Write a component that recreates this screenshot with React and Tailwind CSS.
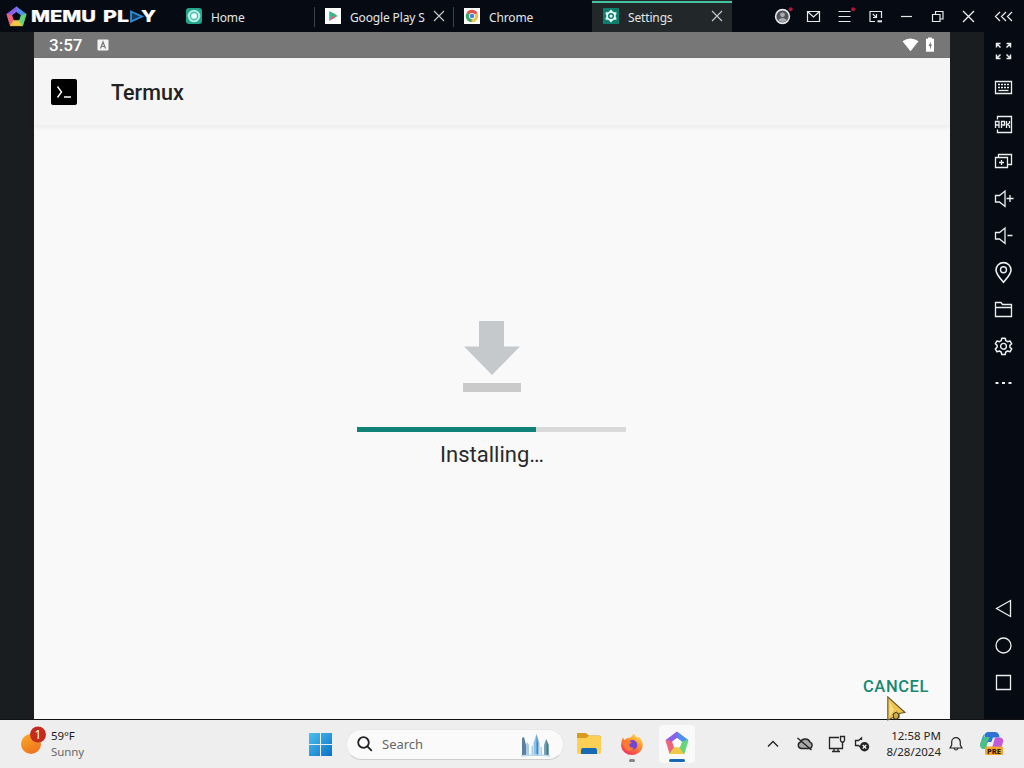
import React from "react"

const Logo = ({ size, hole }) => (
  <svg width={size} height={size} viewBox="0 0 24 24" className="shrink-0">
    <g strokeWidth="1" strokeLinejoin="round">
      <path d="M12 1 L23 9.3 L17 11 L12 7.5 Z" fill="#4f8ff0" stroke="#4f8ff0" />
      <path d="M12 1 L12 7.5 L7.5 11 L1 9.3 Z" fill="#8b60ea" stroke="#8b60ea" />
      <path d="M1 9.3 L7.5 11 L9.5 16 L5 22.5 Z" fill="#ee6478" stroke="#ee6478" />
      <path d="M5 22.5 L9.5 16 L15 16 L19 22.5 Z" fill="#f0c848" stroke="#f0c848" />
      <path d="M19 22.5 L14.8 16 L17 11 L23 9.3 Z" fill="#66d67c" stroke="#66d67c" />
    </g>
    <path d="M12 7.4 L16.4 10.6 L14.7 15.8 L9.3 15.8 L7.6 10.6 Z" fill={hole} stroke={hole} strokeWidth="1" strokeLinejoin="round" />
  </svg>
)

const CloseX = () => (
  <svg width="12" height="12" viewBox="0 0 12 12" className="shrink-0" stroke="#c4c6c8" strokeWidth="1.2">
    <path d="M1 1 L11 11 M11 1 L1 11" />
  </svg>
)

const HomeIcon = () => (
  <svg width="16" height="16" viewBox="0 0 16 16" className="shrink-0">
    <rect width="16" height="16" rx="3" fill="#22a78c" />
    <circle cx="8" cy="8" r="6.3" fill="#b4ece2" />
    <circle cx="8" cy="8" r="3.6" fill="none" stroke="#4bb9aa" strokeWidth="1.2" />
    <circle cx="8" cy="8" r="2.6" fill="#e8fffb" />
  </svg>
)

const PlayIcon = () => (
  <svg width="16" height="16" viewBox="0 0 16 16" className="shrink-0">
    <rect width="16" height="16" fill="#fdfdfd" />
    <path d="M4.2 3 L8.5 8 L4.2 13 Z" fill="#37b6b0" />
    <path d="M4.2 3 L10.8 6.4 L8 8.8 Z" fill="#31b978" />
    <path d="M10.2 6.2 L12.7 8 L10.2 9.6 L8 8 Z" fill="#4cb87a" />
    <path d="M4.2 13 L10.4 9.5 L8 7.8 Z" fill="#e4586a" />
  </svg>
)

const ChromeIcon = () => (
  <svg width="16" height="16" viewBox="0 0 16 16" className="shrink-0">
    <rect width="16" height="16" fill="#fdfdfd" />
    <path d="M8 8 L2.6 4.9 A6.2 6.2 0 0 1 13.6 5.2 Z" fill="#dd5548" />
    <path d="M8 8 L13.6 5.2 A6.2 6.2 0 0 1 7.6 14.2 Z" fill="#f0c252" />
    <path d="M8 8 L7.6 14.2 A6.2 6.2 0 0 1 2.6 4.9 Z" fill="#36a565" />
    <circle cx="8" cy="8" r="3" fill="#fff" />
    <circle cx="8" cy="8" r="2.3" fill="#5084cc" />
  </svg>
)

const gearPath =
  "M7.8 1.2 h3.4 l0.6 2.5 l1.8 1 l2.4 -0.8 l1.7 2.9 l-1.8 1.6 v1.9 l1.8 1.6 l-1.7 2.9 l-2.4 -0.8 l-1.8 1 l-0.6 2.5 h-3.4 l-0.6 -2.5 l-1.8 -1 l-2.4 0.8 l-1.7 -2.9 l1.8 -1.6 v-1.9 l-1.8 -1.6 l1.7 -2.9 l2.4 0.8 l1.8 -1 Z"

const SettingsIcon = () => (
  <svg width="16" height="16" viewBox="0 0 16 16" className="shrink-0">
    <rect width="16" height="16" fill="#0d7f6d" />
    <path
      d="M8 1.8 L10 4.2 L13.3 4.8 L12.2 8 L13.3 11.2 L10 11.8 L8 14.2 L6 11.8 L2.7 11.2 L3.8 8 L2.7 4.8 L6 4.2 Z"
      fill="#ecfffa"
      stroke="#ecfffa"
      strokeWidth="0.6"
    />
    <circle cx="8" cy="8" r="2.3" fill="#ecfffa" stroke="#0d7f6d" strokeWidth="1.5" />
  </svg>
)

const tabs = [
  { label: "Home", icon: <HomeIcon /> },
  { label: "Google Play S", icon: <PlayIcon />, close: true },
  { label: "Chrome", icon: <ChromeIcon /> }
]

const windowIcons = [
  <>
    <circle cx="10.5" cy="10.5" r="6.9" fill="#50535a" strokeWidth="1.6" />
    <circle cx="10.5" cy="8.8" r="2.4" fill="#a9abb0" stroke="none" />
    <path d="M6 14 Q10.5 10 15 14 Q10.5 18 6 14 Z" fill="#a9abb0" stroke="none" />
    <circle cx="18.7" cy="3.2" r="2" fill="#b3133c" stroke="none" />
  </>,
  <path d="M4.5 5.5 h12 v10 h-12 Z M5 6 l5.5 5 l5.5 -5" />,
  <>
    <path d="M4.5 5.5 h12 M4.5 10.5 h12 M4.5 15.5 h12" />
    <circle cx="19.2" cy="3.2" r="2" fill="#b3133c" stroke="none" />
  </>,
  <>
    <path d="M10 15.5 h-5 v-10 h11.5 v6.5" />
    <path d="M7.8 8 l3.2 3.2 M11.5 8 v3.5 h-3.5" />
    <path d="M12.5 15.3 h4.5" strokeWidth="2" />
  </>,
  <path d="M5 10.5 h11" />,
  <path d="M5.5 8.5 h7.5 v7 h-7.5 Z M8.5 8.5 v-3 h7.5 v7.5 h-3" />,
  <path d="M5 5 l11 11 M16 5 l-11 11" strokeWidth="1.4" />
]

const speaker = "M1.5 6.5 h4 l5.5 -4.5 v15.5 l-5.5 -4.5 h-4 Z"

const sideIcons = [
  <path
    d="M2.5 6.5 v-4 h4 M2.5 2.5 l4 4 M12.5 2.5 h4 v4 M16.5 2.5 l-4 4 M2.5 13.5 v4 h4 M2.5 17.5 l4 -4 M12.5 17.5 h4 v-4 M16.5 17.5 l-4 -4"
    strokeWidth="1.5"
  />,
  <>
    <path d="M1.5 3.5 h16 v12 h-16 Z" />
    <path d="M4 6.5 h11.5 M4 9.5 h11.5" strokeDasharray="2 1" />
    <path d="M4.5 12.5 h10" />
  </>,
  <>
    <path d="M3.5 4.5 v-3 h14 v16 h-14 v-3" />
    <path d="M1.5 13 v-6.5 h3.5 v6.5 M1.5 10 h3.5 M7.5 13 v-6.5 h3 v3.5 h-3 M12.5 6 v7 M15.5 6 v2 l-2 1.5 l2 1.5 v2" />
  </>,
  <path d="M1.5 5.5 h12 v10 h-12 Z M4.5 5.5 v-3 h13 v10 h-4 M7.5 8 v5 M5 10.5 h5" />,
  <path d={speaker + " M12.5 9.5 h7 M16 6 v7"} />,
  <path d={speaker + " M13.5 9.5 h5"} />,
  <>
    <path d="M9.5 19.3 C6 15 2 11 2 6.9 A7.5 7.3 0 0 1 17 6.9 C17 11 13 15 9.5 19.3 Z" strokeWidth="1.6" />
    <circle cx="9.5" cy="6.7" r="3" strokeWidth="1.4" />
  </>,
  <path d="M1.5 16.5 v-14 h5.5 l1.5 2 h9 v12 Z M1.5 7.5 h16" />,
  <>
    <path d={gearPath} strokeWidth="1.5" strokeLinejoin="round" />
    <circle cx="9.5" cy="9.3" r="2.9" strokeWidth="1.4" />
  </>,
  <path d="M1.5 9 h3 M8 9 h3 M14.5 9 h3" strokeWidth="2" />
]

const navIcons = [
  <path d="M16.5 2.5 v16 L2.5 10.5 Z" />,
  <circle cx="9.5" cy="10.5" r="7.5" />,
  <path d="M2.5 3.5 h14 v14 h-14 Z" />
]

const SideButton = ({ children }) => (
  <div className="flex h-[37px] items-center justify-center">
    <svg width="20" height="21" viewBox="0 0 20 21" fill="none" stroke="#eceef0" strokeWidth="1.3" className="overflow-visible">
      {children}
    </svg>
  </div>
)

const TitleBar = () => (
  <div className="flex h-8 bg-[#060a12] text-[12px] tracking-[-0.15px] text-[#e4e6e8]">
    <div className="flex w-[176px] items-center pl-[6px]">
      <Logo size={21} hole="#060a12" />
      <svg width="126" height="20" viewBox="0 0 126 20" className="ml-[3px] font-['Inter'] font-extrabold tracking-normal" fontSize="15.5" fill="#fff" stroke="#fff" strokeWidth="0.2">
        <text x="1" y="16" textLength="65" lengthAdjust="spacingAndGlyphs">MEMU</text>
        <text x="73" y="16" textLength="26" lengthAdjust="spacingAndGlyphs">PL</text>
        <path d="M101 5.5 L112 10.5 L101 15.5 Z" fill="#123a63" stroke="#2f8fd8" strokeWidth="1.8" />
        <text x="111" y="16" textLength="15" lengthAdjust="spacingAndGlyphs">Y</text>
      </svg>
    </div>
    {tabs.map((tab) => (
      <div key={tab.label} className="flex w-[139px] items-center py-[7px]">
        <div className="flex min-w-0 flex-1 items-center pl-[10px]">
          {tab.icon}
          <span className="ml-[9px] w-[83px] whitespace-nowrap pt-[3px]">{tab.label}</span>
          {tab.close && <CloseX />}
        </div>
        {tab.label !== "Chrome" && <div className="mt-px h-[20px] w-px bg-[#3d4147]" />}
      </div>
    ))}
    <div className="-ml-px flex w-[140px] flex-col bg-[#222729] pt-px">
      <div className="h-[2px] bg-[#43c3a0]" />
      <div className="flex flex-1 items-center pb-[3px] pl-[11px]">
        <SettingsIcon />
        <span className="ml-[9px] w-[83px] pt-[3px]">Settings</span>
        <CloseX />
      </div>
    </div>
    <div className="ml-[35px] flex items-center">
      {windowIcons.map((icon, i) => (
        <div key={i} className="flex w-[31px] justify-center">
          <svg width="21" height="20" viewBox="0 0 21 20" fill="none" stroke="#e6e8ea" strokeWidth="1.2" className="overflow-visible">
            {icon}
          </svg>
        </div>
      ))}
    </div>
    <div className="flex w-10 items-center justify-center">
      <svg width="20" height="20" viewBox="0 0 20 20" fill="none" stroke="#e6e8ea" strokeWidth="1.3">
        <path d="M6 6 l-4.5 4.5 l4.5 4.5 M12 6 l-4.5 4.5 l4.5 4.5 M18 6 l-4.5 4.5 l4.5 4.5" />
      </svg>
    </div>
  </div>
)

const AndroidScreen = () => (
  <div className="flex w-[916px] flex-col bg-[#f9f9f9] font-['Roboto']">
    {/* Status bar */}
    <div className="flex h-[26px] items-center bg-[#777777] pl-[15px] pr-[15px] text-white">
      <span className="w-[48px] pt-[2px] text-[17px] font-medium">3:57</span>
      <svg width="12" height="12" viewBox="0 0 12 12">
        <rect x="0.5" y="0.5" width="11" height="11" rx="1" fill="#f4f4f4" />
        <path d="M3.5 9.5 L6 3 L8.5 9.5 M4.3 7.5 h3.4" fill="none" stroke="#777" strokeWidth="1.2" />
      </svg>
      <svg width="17" height="14" viewBox="0 0 17 14" className="ml-auto" fill="#fff">
        <path d="M0.5 3.2 Q8.5 -2.4 16.5 3.2 L8.5 13.2 Z" />
      </svg>
      <svg width="10" height="16" viewBox="0 0 10 16" className="ml-[6px]">
        <path d="M3 0.5 h4 v1.3 h2 v13 h-8 v-13 h2 Z" fill="#fff" />
        <path d="M5.7 4.5 L3.5 9 h1.5 v3.5 L7 7.5 h-1.3 Z" fill="#777" />
      </svg>
    </div>
    <div className="flex h-[68px] items-center border-b border-[#eeeeee] bg-[#f5f5f5] pl-[17px] shadow-[0_1px_5px_rgba(0,0,0,0.07)]">
      <svg width="26" height="26" viewBox="0 0 26 26">
        <rect width="26" height="26" rx="2" fill="#000" />
        <path d="M6.5 7.5 L10.5 13 L6.5 18.5 M13 18 h7" fill="none" stroke="#fff" strokeWidth="1.4" />
      </svg>
      <span className="ml-[34px] pt-[3px] text-[21.5px] font-medium text-[#222222]">Termux</span>
    </div>
    <div className="flex flex-1 flex-col items-center pt-[195px]">
      <svg width="58" height="71" viewBox="0 0 58 71">
        <path d="M16 0 h25 v25.5 h16 L29 54 L1 25.5 h15 Z" fill="#c6c9cb" />
        <rect y="62" width="58" height="9" fill="#cacaca" />
      </svg>
      <div className="mr-px mt-[35px] h-[5px] w-[269px] bg-[#d9d9d9]">
        <div className="h-full w-[179px] bg-[#108278]" />
      </div>
      <div className="mt-[6px] text-[22px] leading-[33px] text-[#2a2a2a]">Installing…</div>
      <div className="mb-[20px] mr-[21px] mt-auto self-end text-[16.5px] font-medium leading-[24px] tracking-[0.6px] text-[#158a73]">CANCEL</div>
    </div>
  </div>
)

const Taskbar = () => (
  <div className="flex h-12 items-center bg-[#eeeeee] font-['Noto_Sans']">
    <svg width="28" height="32" viewBox="0 0 28 32" className="-mt-[6px] ml-[20px]">
      <defs>
        <linearGradient id="sun" x1="0" y1="0" x2="0.5" y2="1">
          <stop offset="0" stopColor="#f9ad25" />
          <stop offset="1" stopColor="#ef7620" />
        </linearGradient>
      </defs>
      <circle cx="11" cy="19" r="10" fill="url(#sun)" />
      <circle cx="18" cy="9.5" r="8" fill="#c42b1c" />
      <text x="18" y="13.8" textAnchor="middle" fontSize="12" fill="#fff">1</text>
    </svg>
    <div className="ml-[3px] w-[257px] text-[11.5px] leading-4 tracking-[-0.1px]">
      <div className="text-[#1b1b1b]">59°F</div>
      <div className="text-[#696969]">Sunny</div>
    </div>

    <svg width="24" height="24" viewBox="0 0 24 24">
      <defs>
        <linearGradient id="win" x1="0" y1="0" x2="1" y2="1">
          <stop offset="0" stopColor="#4cc2ee" />
          <stop offset="1" stopColor="#0870c8" />
        </linearGradient>
      </defs>
      <path d="M1 1 h11 v11 h-11 Z M13 1 h11 v11 h-11 Z M1 13 h11 v11 h-11 Z M13 13 h11 v11 h-11 Z" fill="url(#win)" />
    </svg>

    <div className="ml-[14px] flex h-[31px] w-[218px] items-center rounded-full border border-[#e8e8e8] border-b-[#cdcdcd] bg-[#fafafa] pl-[10px] pr-[12px]">
      <svg width="16" height="16" viewBox="0 0 16 16" fill="none" stroke="#222" strokeWidth="1.8">
        <circle cx="6.5" cy="6.5" r="5.3" />
        <path d="M10.4 10.4 L14.8 14.8" />
      </svg>
      <span className="ml-[9px] pt-px text-[13px] text-[#666666]">Search</span>
      <svg width="30" height="24" viewBox="0 0 30 24" className="ml-auto mt-[4px]">
        <path d="M1 4 L3 3 L5 11 V21 H1 Z" fill="#5d7f9d" />
        <path d="M6 8 L8 11 V22 H5 V11 Z" fill="#a9cbe6" />
        <path d="M15.5 0 L18.5 9 V22 H12.5 V9 Z" fill="#8fc1e6" />
        <path d="M15.5 0 L17 9 V22 H15.5 Z" fill="#3f86c0" />
        <path d="M10.5 12 H12 V22 H10.5 Z M19.5 13 H21 V22 H19.5 Z" fill="#a7d0ea" />
        <path d="M25 5 L28 11 V21 H23 V11 Z" fill="#77a4b3" />
        <path d="M25.5 5 L27 11 V21 H25.5 Z" fill="#4b7686" />
        <path d="M0 22 Q15 20 29 22" fill="none" stroke="#b6d9ec" strokeWidth="1.5" />
      </svg>
    </div>

    <svg width="26" height="24" viewBox="0 0 26 24" className="ml-[12px]">
      <path d="M1 1.5 Q1 1 2 1 h8 l3 2.5 h10 q2 0 2 2 V12 H1 Z" fill="#d99b1f" />
      <path d="M1 6 h9 l3 -2 h10 q2 0 2 2 V20 q0 2 -2 2 H3 q-2 0 -2 -2 Z" fill="#fbd055" />
      <path d="M5 22 V18 q0 -2 2 -2 h12 q2 0 2 2 V22 Z" fill="#1669b3" />
    </svg>

    <div className="ml-[18px] mt-[7px] flex flex-col items-center">
      <svg width="24" height="24" viewBox="0 0 24 24">
        <defs>
          <linearGradient id="fox" x1="0.8" y1="0" x2="0.2" y2="1">
            <stop offset="0" stopColor="#ffe04b" />
            <stop offset="0.45" stopColor="#ff8a2a" />
            <stop offset="1" stopColor="#ee2b63" />
          </linearGradient>
        </defs>
        <path d="M3 4.5 L4.5 7 Q7 4.5 10 4.8 Q12 4 13.5 0.8 Q16 3 17.5 5 L19 4 Q23 8 22.8 13 A11 10.5 0 0 1 1 13 Q0.8 8 3 4.5 Z" fill="url(#fox)" />
        <circle cx="12.3" cy="12" r="5" fill="#7146d0" />
        <path d="M3 8.5 Q8 6 12 9.5 Q9.5 10 9.2 12 Q10 15.5 14 14.5 Q12 18.5 7 17.5 Q3 14 3 8.5 Z" fill="#fb7a35" />
      </svg>
      <div className="mt-[2px] h-[3px] w-[6px] rounded-full bg-[#858585]" />
    </div>

    <div className="ml-[15px] flex h-[38px] w-[36px] flex-col items-center rounded bg-[#f9f9f9] pt-[6px]">
      <Logo size={24} hole="#ffffff" />
      <div className="mt-[4px] h-[3px] w-4 rounded-full bg-[#1769b5]" />
    </div>

    <div className="ml-[72px] flex items-center">
      <svg width="12" height="12" viewBox="0 0 12 12" fill="none" stroke="#222" strokeWidth="1.3">
        <path d="M1 8.5 L6 3.5 L11 8.5" />
      </svg>
      <svg width="18" height="16" viewBox="0 0 18 16" className="ml-[17px]" fill="none" stroke="#252525" strokeWidth="1.4">
        <path d="M5 12.5 h8.5 a3.3 3.3 0 0 0 0.5 -6.3 a5 4.5 0 0 0 -9.5 -0.2 a3.4 3.4 0 0 0 0.5 6.5 Z" fill="#a8a8a8" />
        <path d="M1.5 2 L15.5 14" />
      </svg>
      <svg width="18" height="18" viewBox="0 0 18 18" className="ml-[14px]" fill="none" stroke="#252525" strokeWidth="1.3">
        <path d="M11 2.5 H1.5 V13.5 H14.5 V9 M4 16.5 h8 M6 13.5 v3 M10 13.5 v3" />
        <path d="M12.5 1.5 h4 v4 l-1 1.5 h-2 l-1 -1.5 Z M14.5 7 v3" />
      </svg>
      <svg width="17" height="16" viewBox="0 0 17 16" className="ml-[8px]" fill="none" stroke="#252525" strokeWidth="1.3">
        <path d="M7.5 4 V2 L4.5 4.5 H1.5 V9.5 H4.5 L6 11" />
        <circle cx="10.5" cy="10.8" r="4.7" fill="#252525" stroke="none" />
        <path d="M8.7 9 L12.3 12.6 M12.3 9 L8.7 12.6" stroke="#fff" />
      </svg>
    </div>

    <div className="w-[70px] whitespace-nowrap text-right text-[11.5px] leading-4 text-[#252525]">
      <div>12:58 PM</div>
      <div>8/28/2024</div>
    </div>
    <svg width="14" height="16" viewBox="0 0 14 16" className="ml-[8px]" fill="none" stroke="#222" strokeWidth="1.2">
      <path d="M1 12 L2.7 9 V6 a4.3 4.3 0 0 1 8.6 0 V9 L13 12 Z M5 12.5 q2 3 4 0" />
    </svg>
    <svg width="26" height="26" viewBox="0 0 26 26" className="ml-[16px]">
      <path d="M6 3 Q7 1 9 1 H16 Q19 1 20 4 L20.5 6.5 H14 L12 12 H6 Z" fill="#2f72d4" />
      <path d="M6 3 Q5 7 5 9 L4 17 Q0 16 1.5 12 L3.5 6 Q4.5 3 6 3 Z" fill="#2fa5c4" />
      <path d="M5 6 H11 Q9.5 8 8.5 12 L7 18 H4 Q0 17 1.5 12 Z" fill="#4cbf83" />
      <path d="M16 6.5 H21 Q25 7 24 11 L22 18 H11 Q13.5 17 14.5 12 Z" fill="#c05ad8" />
      <path d="M9 11 H14 L12 17 H8 Z" fill="#f3f0f4" />
      <rect x="6" y="15.5" width="18" height="8.5" rx="1.5" fill="#f5a52d" />
      <text x="15" y="22.6" textAnchor="middle" fontSize="7.5" fontWeight="800" textLength="14" lengthAdjust="spacingAndGlyphs" fill="#2a1a05">PRE</text>
    </svg>
  </div>
)

export default function App() {
  return (
    <div className="relative flex h-[768px] w-[1024px] flex-col overflow-hidden bg-[#eeeeee] font-['Noto_Sans',sans-serif]">
      <TitleBar />
      <div className="flex h-[687px]">
        <div className="w-[34px] bg-[#1a1d20]" />
        <AndroidScreen />
        <div className="w-[34px] bg-[#1a1d20]" />
        <div className="flex w-10 flex-col bg-[#060a12] pb-[18px] pt-px">
          {sideIcons.map((icon, i) => (
            <SideButton key={i}>{icon}</SideButton>
          ))}
          <div className="mt-auto">
            {navIcons.map((icon, i) => (
              <SideButton key={i}>{icon}</SideButton>
            ))}
          </div>
        </div>
      </div>
      <div className="h-px bg-[#111111]" />
      <Taskbar />

      {/* Cursor */}
      <svg width="20" height="26" viewBox="0 0 20 26" className="absolute left-[887px] top-[696px]">
        <path d="M0.8 0.8 L18 16.5 L12 17.5 L12 22 L6 21.5 L0.8 24 Z" fill="#ecc452" stroke="#6b5524" strokeWidth="1.1" />
        <path d="M2.5 5 L7 14 L2.5 21 Z" fill="#f7dc7c" />
        <path d="M6 18 L9.5 16 L12 19 L10.5 23 L7 23 Z" fill="#c9ae4a" stroke="#3a3015" />
      </svg>
    </div>
  )
}
